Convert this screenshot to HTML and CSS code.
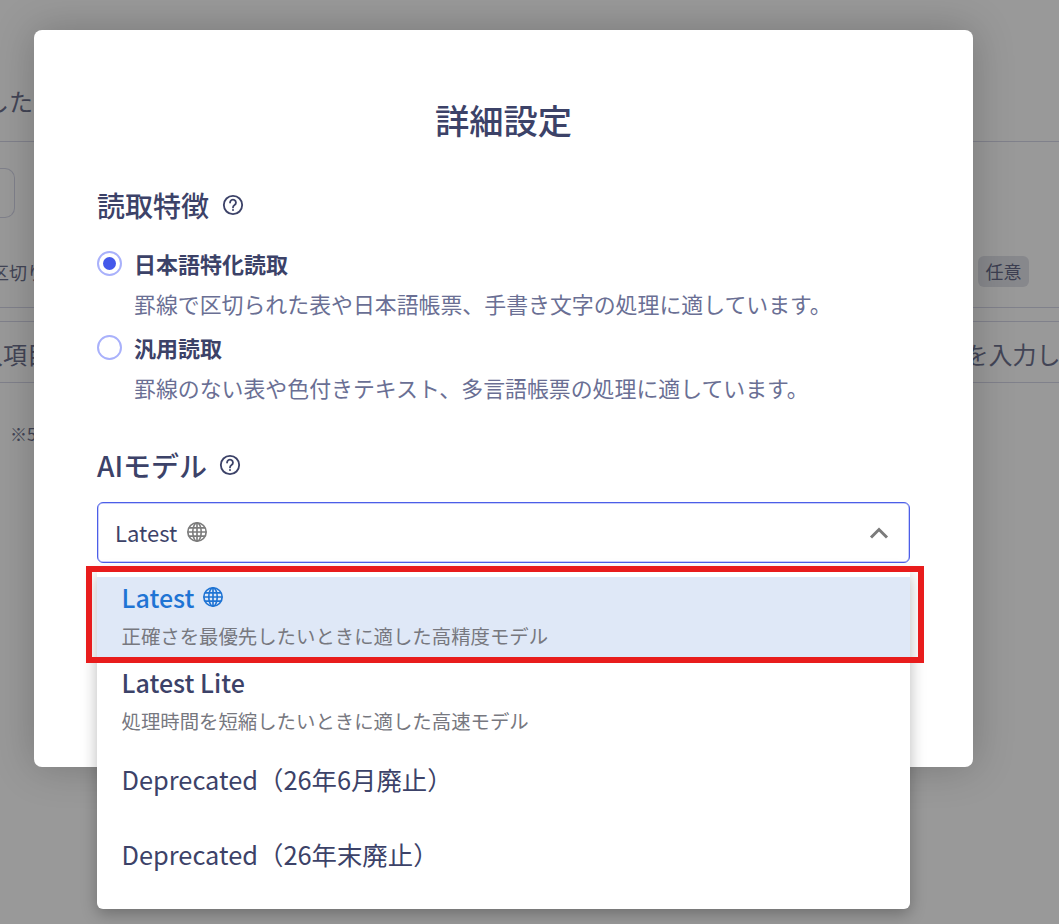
FILE: index.html
```html
<!DOCTYPE html>
<html lang="ja">
<head>
<meta charset="utf-8">
<title>詳細設定</title>
<link rel="stylesheet" href="styles.css">
</head>
<body>
<div class="page">
  <div class="bg-intro"><span class="bg-clip-left">ました</span></div>
  <div class="bg-box-row"><div class="bg-box"></div></div>
  <div class="bg-label-row">
    <span class="bg-small">区切り</span>
    <span class="badge">任意</span>
  </div>
  <div class="bg-input-row">
    <span class="bg-clip-input">入項目</span>
    <span class="bg-clip-right">を入力してください</span>
  </div>
  <div class="bg-note">※5</div>
</div>

<div class="overlay"></div>

<section class="modal">
  <h1 class="modal-title">詳細設定</h1>

  <h2 class="section-title">読取特徴
    <svg class="help" viewBox="0 0 24 24"><circle cx="12" cy="12" r="10"/><path d="M8.8 9.4a3.2 3.2 0 1 1 4.9 2.7c-1.1.7-1.7 1.3-1.7 2.5"/><circle class="dot" cx="12" cy="17.4" r="1.1"/></svg>
  </h2>

  <div class="radio-group">
    <div class="radio-item">
      <span class="radio radio-on"></span>
      <div class="radio-text">
        <div class="radio-label">日本語特化読取</div>
        <div class="radio-desc">罫線で区切られた表や日本語帳票、手書き文字の処理に適しています。</div>
      </div>
    </div>
    <div class="radio-item">
      <span class="radio"></span>
      <div class="radio-text">
        <div class="radio-label">汎用読取</div>
        <div class="radio-desc">罫線のない表や色付きテキスト、多言語帳票の処理に適しています。</div>
      </div>
    </div>
  </div>

  <h2 class="section-title section-title-ai">AIモデル
    <svg class="help" viewBox="0 0 24 24"><circle cx="12" cy="12" r="10"/><path d="M8.8 9.4a3.2 3.2 0 1 1 4.9 2.7c-1.1.7-1.7 1.3-1.7 2.5"/><circle class="dot" cx="12" cy="17.4" r="1.1"/></svg>
  </h2>

  <div class="select">
    <span class="select-value">Latest
      <svg class="globe globe-grey" viewBox="0 0 24 24"><circle cx="12" cy="12" r="10"/><ellipse cx="12" cy="12" rx="4.6" ry="10"/><path d="M12 2v20M2 12h20M3.2 7.5h17.6M3.2 16.5h17.6"/></svg>
    </span>
    <svg class="chevron" viewBox="0 0 20 12"><path d="M2 10.5 10 2.5l8 8"/></svg>
  </div>
</section>

<div class="dropdown">
  <div class="option option-active">
    <div class="option-name">Latest
      <svg class="globe globe-blue" viewBox="0 0 24 24"><circle cx="12" cy="12" r="10"/><ellipse cx="12" cy="12" rx="4.6" ry="10"/><path d="M12 2v20M2 12h20M3.2 7.5h17.6M3.2 16.5h17.6"/></svg>
    </div>
    <div class="option-desc">正確さを最優先したいときに適した高精度モデル</div>
  </div>
  <div class="option option-lite">
    <div class="option-name">Latest Lite</div>
    <div class="option-desc">処理時間を短縮したいときに適した高速モデル</div>
  </div>
  <div class="option option-plain"><div class="option-name">Deprecated（26年6月廃止）</div></div>
  <div class="option option-plain"><div class="option-name">Deprecated（26年末廃止）</div></div>
</div>

<div class="highlight"></div>
</body>
</html>
```

FILE: styles.css
```css
* { box-sizing: border-box; }
html, body { margin: 0; padding: 0; }
body {
  width: 1059px;
  height: 924px;
  overflow: hidden;
  position: relative;
  background: #fff;
  color: #3c4268;
  font-family: "Noto Sans CJK JP", "Noto Sans", sans-serif;
}

/* page behind the dialog */
.page {
  height: 924px;
  overflow: hidden;
  font-size: 24px;
  color: #6f7390;
}
.bg-intro {
  height: 142px;
  padding-top: 81px;
  line-height: 40px;
  border-bottom: 1px solid #d5d7e8;
}
.bg-clip-left { margin-left: -39px; }
.bg-box-row { padding-top: 26px; height: 114px; }
.bg-box {
  width: 15px;
  height: 50px;
  border: 1px solid #d5d7e8;
  border-left: 0;
  border-radius: 0 10px 10px 0;
}
.bg-label-row {
  height: 52px;
  display: flex;
  justify-content: space-between;
  align-items: flex-start;
  border-bottom: 1px solid #d5d7e8;
  padding-right: 30px;
}
.bg-small { font-size: 18px; line-height: 32px; margin-left: -9px; }
.badge {
  width: 51px;
  height: 31px;
  border-radius: 6px;
  background: #e2e3ea;
  font-size: 18px;
  line-height: 31px;
  text-align: center;
  color: #666a88;
}
.bg-input-row {
  margin-top: 13px;
  height: 62px;
  display: flex;
  justify-content: space-between;
  white-space: nowrap;
  line-height: 64px;
  border-top: 1px solid #d5d7e8;
  border-bottom: 1px solid #d5d7e8;
}
.bg-clip-input { margin-left: -21px; }
.bg-clip-right { margin-right: -120px; }
.bg-note { padding: 38px 0 0 10px; font-size: 17px; line-height: 26px; }

.overlay {
  position: absolute;
  inset: 0;
  background: rgba(0, 0, 0, 0.4);
}

/* dialog */
.modal {
  position: absolute;
  left: 34px;
  top: 30px;
  width: 939px;
  height: 737px;
  padding: 0 63px;
  background: #fff;
  border-radius: 8px;
  box-shadow: 0 0 42px rgba(0, 0, 0, 0.22);
}
.modal-title {
  margin: 0;
  padding-top: 65px;
  font-size: 34.3px;
  line-height: 48px;
  font-weight: 500;
  text-align: center;
}
.section-title {
  display: flex;
  align-items: center;
  margin: 0;
  padding-top: 42px;
  font-size: 28px;
  line-height: 40px;
  font-weight: 500;
  gap: 13px;
}
.section-title-ai { padding-top: 32px; gap: 12px; }
.help { width: 22px; height: 22px; fill: none; stroke: #3c4268; stroke-width: 2; stroke-linecap: round; }
.help .dot { fill: #3c4268; stroke: none; }

.radio-group { padding-top: 20px; display: flex; flex-direction: column; gap: 0; }
.radio-item { display: flex; gap: 12px; height: 84px; }
.radio {
  flex: none;
  width: 25px;
  height: 25px;
  margin-top: 6px;
  border: 2px solid #a9b1fb;
  border-radius: 50%;
  display: flex;
  align-items: center;
  justify-content: center;
  background: #fff;
}
.radio-on::after {
  content: "";
  width: 13px;
  height: 13px;
  border-radius: 50%;
  background: #4458ea;
}
.radio-label { font-size: 22px; line-height: 36px; font-weight: 700; }
.radio-desc { font-size: 21.9px; line-height: 44px; color: #6a6f94; white-space: nowrap; margin-top: 1px; }

.select {
  margin-top: 17px;
  height: 61px;
  padding: 0 20px 0 18px;
  display: flex;
  align-items: center;
  justify-content: space-between;
  border: 1px solid #4c5ee8;
  border-radius: 6px;
  box-shadow: inset 0 0 0 0.5px rgba(76, 94, 232, 0.6);
}
.select-value { display: flex; align-items: center; gap: 9px; margin-left: -1px; padding-bottom: 2px; font-size: 22px; }
.globe { fill: none; stroke-width: 1.8; }
.globe-grey { width: 22px; height: 22px; stroke: #7c7c7c; }
.globe-blue { width: 22px; height: 22px; stroke: #1f74d4; }
.chevron { width: 20px; height: 12px; fill: none; stroke: #7b7b7b; stroke-width: 3; }

/* open list */
.dropdown {
  position: absolute;
  left: 97px;
  top: 570px;
  width: 813px;
  height: 339px;
  padding: 7px 0 15px;
  background: #fff;
  border-radius: 0 0 6px 6px;
  box-shadow: 0 5px 16px rgba(0, 0, 0, 0.28);
}
.option { height: 83px; padding: 0 24px 0 24.5px; }
.option-active { background: #dfe8f7; }
.option-active .option-name { color: #1f74d4; line-height: 40px; }
.option-active .option-desc { margin-top: 3px; }
.option-lite { padding-top: 1px; }
.option-lite .option-desc { margin-top: 2px; }
.option-name {
  display: flex;
  align-items: center;
  gap: 8px;
  font-size: 25px;
  line-height: 42px;
  font-weight: 500;
  white-space: nowrap;
}
.option-desc { margin-top: 1px; font-size: 19.4px; line-height: 32px; color: #77787f; white-space: nowrap; }
.option-plain { height: 75px; padding-top: 15px; }
.option-plain .option-name { font-size: 25.4px; font-weight: 400; }

.highlight {
  position: absolute;
  left: 86px;
  top: 566px;
  width: 838px;
  height: 97px;
  border: 6px solid #e81c1c;
}
```
